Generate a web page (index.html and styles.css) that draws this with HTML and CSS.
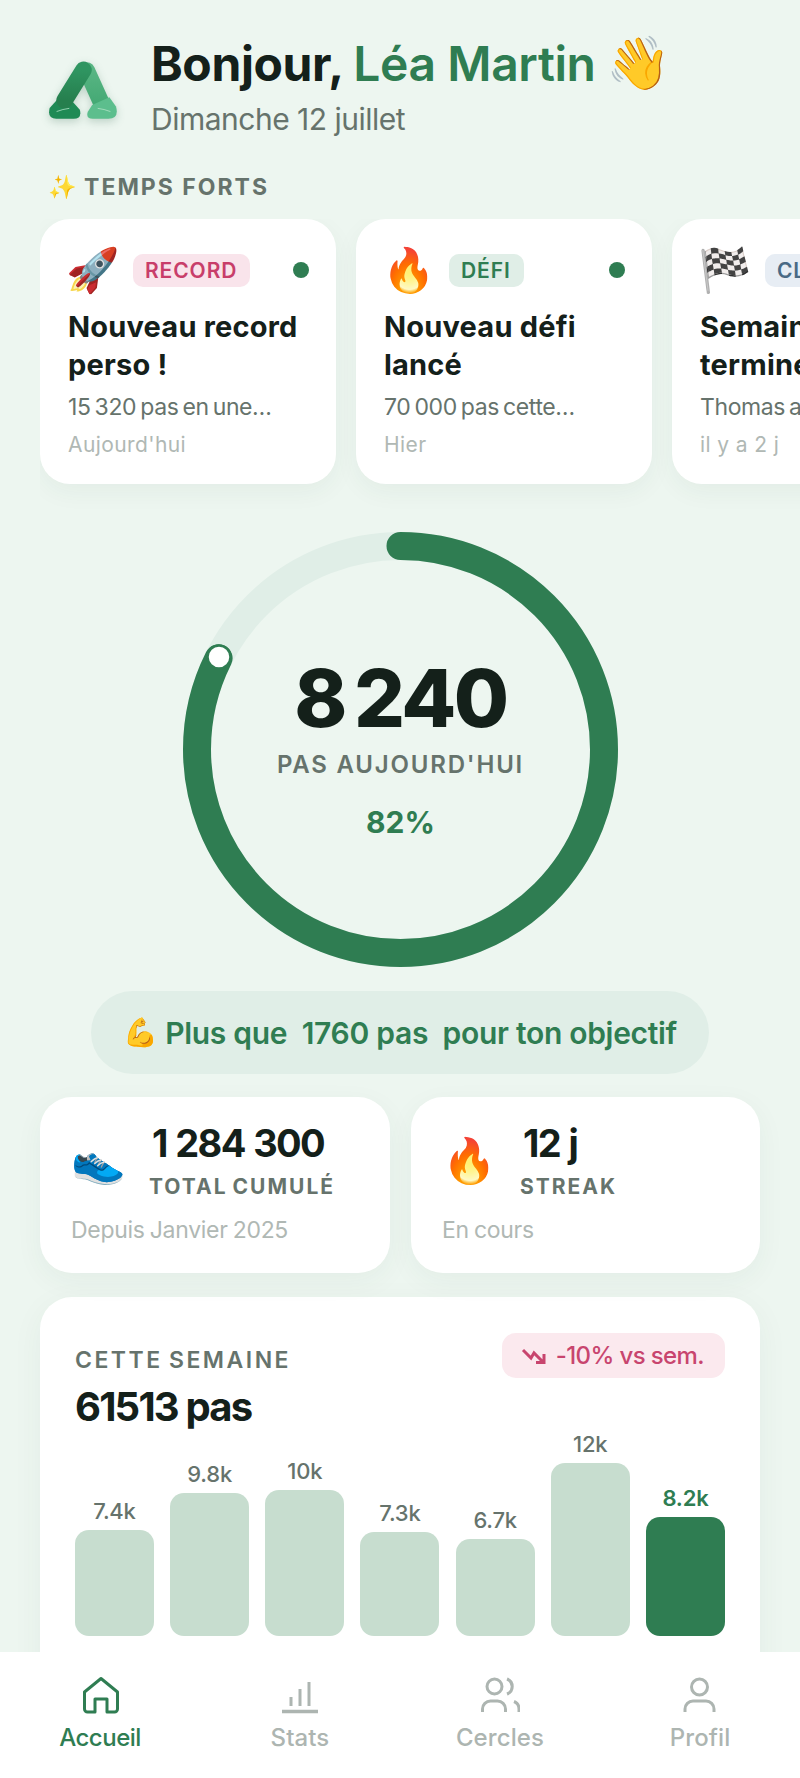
FILE: index.html
```html
<!DOCTYPE html>
<html lang="fr">
<head>
<meta charset="utf-8">
<title>Accueil</title>
<link rel="stylesheet" href="styles.css">
</head>
<body>
<div class="page">
  <main class="content">
    <header class="header">
      <svg class="logo" viewBox="50 50 220 200" aria-hidden="true">
        <defs>
          <linearGradient id="lgDark" x1="0" y1="0" x2="0" y2="1"><stop offset="0" stop-color="#2f9561"/><stop offset="1" stop-color="#267f4e"/></linearGradient>
          <linearGradient id="lgLight" x1="0" y1="0" x2="0" y2="1"><stop offset="0" stop-color="#58b583"/><stop offset="1" stop-color="#44a974"/></linearGradient>
        </defs>
        <path class="arm" stroke="url(#lgLight)" d="M170 90L215 190"/>
        <path fill="#5cbe8d" d="M186 194L173 214Q166 235 188 235H235Q268 235 258 198L238 170Z"/>
        <path fill="#1f8a55" d="M92 165L128 185L149 208Q156 235 130 235H78Q50 235 58 203Z"/>
        <path class="arm" stroke="url(#lgDark)" d="M160 88L103 180"/>
        <path class="logo-shine" d="M80 213Q98 206 116 204M204 204Q222 206 240 213"/>
      </svg>
      <div class="greeting">
        <h1 class="title">Bonjour, <span class="name">Léa Martin</span> <span class="emoji">👋</span></h1>
        <p class="date">Dimanche 12 juillet</p>
      </div>
    </header>

    <h2 class="section-title"><span class="emoji">✨</span> TEMPS FORTS</h2>

    <section class="highlights">
      <article class="hl-card">
        <div class="hl-top"><span class="emoji hl-emoji">🚀</span><span class="tag tag-record">RECORD</span><span class="dot"></span></div>
        <h3 class="hl-title">Nouveau record perso !</h3>
        <p class="hl-sub">15 320 pas en une…</p>
        <p class="hl-time">Aujourd'hui</p>
      </article>
      <article class="hl-card">
        <div class="hl-top"><span class="emoji hl-emoji">🔥</span><span class="tag tag-defi">DÉFI</span><span class="dot"></span></div>
        <h3 class="hl-title">Nouveau défi lancé</h3>
        <p class="hl-sub">70 000 pas cette…</p>
        <p class="hl-time">Hier</p>
      </article>
      <article class="hl-card">
        <div class="hl-top"><span class="emoji hl-emoji">🏁</span><span class="tag tag-class">CLASSEMENT</span></div>
        <h3 class="hl-title">Semaine terminée</h3>
        <p class="hl-sub">Thomas a gagné…</p>
        <p class="hl-time">il y a 2 j</p>
      </article>
    </section>

    <section class="ring">
      <svg class="ring-svg" viewBox="0 0 435 435" aria-hidden="true">
        <circle class="ring-track" cx="217.5" cy="217.5" r="203.5"/>
        <circle class="ring-value" cx="217.5" cy="217.5" r="203.5" pathLength="100" stroke-dasharray="82.4 100" transform="rotate(-90 217.5 217.5)"/>
        <circle class="ring-knob" cx="36" cy="125" r="11.5"/>
      </svg>
      <div class="ring-center">
        <div class="ring-number">8 240</div>
        <div class="ring-label">PAS AUJOURD'HUI</div>
        <div class="ring-pct">82%</div>
      </div>
    </section>

    <div class="goal"><span class="emoji goal-emoji">💪</span> Plus que&nbsp; 1760 pas&nbsp; pour ton objectif</div>

    <section class="stats">
      <article class="stat-card">
        <div class="stat-top">
          <span class="emoji stat-emoji">👟</span>
          <div>
            <div class="stat-num">1 284 300</div>
            <div class="stat-label">TOTAL CUMULÉ</div>
          </div>
        </div>
        <p class="stat-foot">Depuis Janvier 2025</p>
      </article>
      <article class="stat-card">
        <div class="stat-top">
          <span class="emoji stat-emoji">🔥</span>
          <div>
            <div class="stat-num">12 j</div>
            <div class="stat-label">STREAK</div>
          </div>
        </div>
        <p class="stat-foot">En cours</p>
      </article>
    </section>

    <section class="week">
      <div class="week-head">
        <div class="week-left">
          <div class="week-label">CETTE SEMAINE</div>
          <div class="week-total">61513 pas</div>
        </div>
        <div class="trend">
          <svg class="trend-icon" viewBox="0 0 26 16" aria-hidden="true"><path d="M2 2L10 10L13 5L22 14M23 6V14.500H15"/></svg>
          -10% vs sem.
        </div>
      </div>
      <div class="chart">
        <div class="col"><span class="val">7.4k</span><div class="bar" style="height:106px"></div></div>
        <div class="col"><span class="val">9.8k</span><div class="bar" style="height:143px"></div></div>
        <div class="col"><span class="val">10k</span><div class="bar" style="height:146px"></div></div>
        <div class="col"><span class="val">7.3k</span><div class="bar" style="height:104px"></div></div>
        <div class="col"><span class="val">6.7k</span><div class="bar" style="height:97px"></div></div>
        <div class="col"><span class="val">12k</span><div class="bar" style="height:173px"></div></div>
        <div class="col col-today"><span class="val">8.2k</span><div class="bar" style="height:119px"></div></div>
      </div>
    </section>
  </main>

  <nav class="nav">
    <a class="nav-item active">
      <svg class="nav-icon" viewBox="0 0 40 40" aria-hidden="true"><path d="M4.500 16L21 2.500L37.500 16V33a3 3 0 0 1-3 3H27V23H15V36H7.500a3 3 0 0 1-3-3Z"/></svg>
      <span>Accueil</span>
    </a>
    <a class="nav-item">
      <svg class="nav-icon" viewBox="0 0 40 40" aria-hidden="true"><path class="thick" d="M2 35.500H38"/><path d="M11 21V30M20 13V30M29 6V30"/></svg>
      <span>Stats</span>
    </a>
    <a class="nav-item">
      <svg class="nav-icon" viewBox="0 0 40 40" aria-hidden="true"><circle cx="14.500" cy="10.500" r="7.500"/><path d="M27 3a8 8 0 0 1 0 15M2.500 36V33a8 8 0 0 1 8-8h7a8 8 0 0 1 8 8v3M34 25.500a8 8 0 0 1 5 7.500v3"/></svg>
      <span>Cercles</span>
    </a>
    <a class="nav-item">
      <svg class="nav-icon" viewBox="0 0 40 40" aria-hidden="true"><circle cx="19.500" cy="11" r="8"/><path d="M5 36V33a8 8 0 0 1 8-8h13a8 8 0 0 1 8 8v3"/></svg>
      <span>Profil</span>
    </a>
  </nav>
</div>
</body>
</html>
```

FILE: styles.css
```css
* { box-sizing: border-box; }
html, body { margin: 0; padding: 0; }
body {
  font-family: "Inter", "Noto Sans", "Noto Color Emoji", sans-serif;
  color: #14201a;
  background: #edf6f0;
}
h1, h2, h3, p { margin: 0; }
.emoji { font-family: "Noto Color Emoji", sans-serif; font-weight: 400; letter-spacing: 0; }

.page { width: 800px; height: 1778px; display: flex; flex-direction: column; overflow: hidden; }
.content { flex: 1; min-height: 0; overflow: hidden; padding: 34px 40px 0; }

.header { display: flex; align-items: flex-start; }
.logo { width: 73px; height: 67px; margin: 23px 0 0 7px; flex: none; filter: drop-shadow(0 3px 4px rgba(20, 80, 50, .22)); }
.arm { fill: none; stroke-width: 50; stroke-linecap: round; }
.logo-shine { fill: none; stroke: #b9e6cc; stroke-width: 3; stroke-linecap: round; opacity: .75; }
.greeting { margin-left: 31px; }
.title { font-size: 48px; line-height: 60px; font-weight: 700; letter-spacing: -.4px; white-space: nowrap; }
.name { color: #2f7d52; font-weight: 600; }
.title .emoji { font-size: 52px; line-height: 0; }
.date { margin-top: 5px; font-size: 30px; line-height: 40px; color: #66736c; letter-spacing: -.5px; }

.section-title { margin: 32px 0 16px 8px; font-size: 23px; line-height: 32px; font-weight: 700; letter-spacing: 2px; color: #66736c; white-space: nowrap; }
.section-title .emoji { line-height: 0; }

.highlights { display: flex; gap: 20px; margin-right: -40px; overflow: hidden; padding-bottom: 30px; margin-bottom: -30px; }
.hl-card { flex: none; width: 296px; height: 265px; padding: 27px 28px 0; background: #fff; border-radius: 30px; box-shadow: 0 8px 24px rgba(30, 70, 50, .05); }
.hl-top { display: flex; align-items: center; height: 48px; }
.hl-emoji { font-size: 43px; line-height: 48px; width: 50px; flex: none; display: flex; justify-content: center; margin-right: 15px; }
.tag { height: 33px; line-height: 33px; padding: 0 13px 0 12px; border-radius: 10px; font-size: 21px; font-weight: 600; letter-spacing: .9px; white-space: nowrap; }
.tag-record { background: #f9e4eb; color: #c83e6a; }
.tag-defi { background: #e0eee7; color: #2f7d52; }
.tag-class { background: #e7edf4; color: #4a6a85; }
.dot { margin-left: auto; margin-right: -1px; width: 16px; height: 16px; border-radius: 50%; background: #2f7d52; flex: none; }
.hl-title { margin-top: 14px; font-size: 29px; line-height: 38px; font-weight: 700; letter-spacing: .2px; }
.hl-sub { margin-top: 7px; font-size: 23px; line-height: 32px; color: #66736c; white-space: nowrap; letter-spacing: -.4px; word-spacing: -2px; }
.hl-time { margin-top: 8px; font-size: 21px; line-height: 28px; color: #b0b8b4; white-space: nowrap; letter-spacing: .4px; }

.ring { position: relative; width: 435px; height: 435px; margin: 48px auto 0; left: .5px; }
.ring-svg { display: block; width: 435px; height: 435px; }
.ring-track, .ring-value { fill: none; stroke-width: 28; }
.ring-track { stroke: #e0eee7; }
.ring-value { stroke: #2f7d52; stroke-linecap: round; }
.ring-knob { fill: #fff; stroke: #2f7d52; stroke-width: 2.5; }
.ring-center { position: absolute; inset: 0; display: flex; flex-direction: column; align-items: center; justify-content: center; padding-bottom: 1px; }
.ring-number { font-size: 80px; line-height: 84px; font-weight: 800; letter-spacing: -2.5px; word-spacing: -6px; }
.ring-label { margin-top: 9px; font-size: 24px; line-height: 32px; font-weight: 600; letter-spacing: 1.8px; color: #66736c; white-space: nowrap; }
.ring-pct { margin-top: 21px; font-size: 30px; line-height: 40px; font-weight: 700; color: #2f7d52; }

.goal { width: 618px; height: 83px; margin: 24px auto 0; border-radius: 42px; background: #e0eee7; color: #2f7d52; font-size: 30px; font-weight: 600; letter-spacing: -.3px; display: flex; align-items: center; justify-content: center; white-space: pre; }
.goal-emoji { font-size: 28px; }

.stats { display: grid; grid-template-columns: 350px 349px; gap: 21px; margin-top: 23px; }
.stat-card { height: 176px; padding: 24px 20px 0 31px; background: #fff; border-radius: 32px; box-shadow: 0 8px 28px rgba(30, 70, 50, .05); }
.stat-top { display: flex; align-items: center; }
.stat-emoji { font-size: 44px; line-height: 56px; width: 53px; text-align: center; flex: none; margin-right: 25px; }
.stat-num { padding-left: 3px; font-size: 38px; line-height: 44px; font-weight: 700; letter-spacing: -1.6px; word-spacing: 1px; white-space: nowrap; }
.stat-label { margin-top: 8px; font-size: 21px; line-height: 28px; font-weight: 700; letter-spacing: 2px; color: #66736c; white-space: nowrap; word-spacing: -2px; }
.stat-foot { margin-top: 13px; font-size: 23px; line-height: 32px; color: #b0b8b4; white-space: nowrap; letter-spacing: -.3px; word-spacing: -1px; }

.week { margin-top: 24px; height: 420px; padding: 36px 35px 0; background: #fff; border-radius: 32px; box-shadow: 0 8px 32px rgba(30, 70, 50, .05); }
.week-head { display: flex; justify-content: space-between; align-items: flex-start; }
.week-left { padding-top: 12px; }
.week-label { font-size: 23px; line-height: 30px; font-weight: 600; letter-spacing: 2.5px; color: #66736c; white-space: nowrap; word-spacing: -2px; }
.week-total { margin-top: 9px; font-size: 40px; line-height: 46px; font-weight: 700; letter-spacing: -1.8px; }
.trend { height: 45px; padding: 0 21px 0 19px; display: flex; align-items: center; gap: 9px; border-radius: 14px; background: #fbe9ee; color: #c8456e; font-size: 24px; font-weight: 500; letter-spacing: -.6px; white-space: nowrap; }
.trend-icon { width: 26px; height: 16px; flex: none; fill: none; stroke: #c8456e; stroke-width: 3; }

.chart { display: flex; justify-content: space-between; align-items: flex-end; height: 206px; }
.col { width: 79px; display: flex; flex-direction: column; align-items: center; }
.val { font-size: 22px; line-height: 28px; margin-bottom: 5px; font-weight: 500; color: #66736c; letter-spacing: -.2px; }
.bar { width: 100%; background: #c7ddcf; border-radius: 14px; }
.col-today .val { color: #2f7d52; font-weight: 600; }
.col-today .bar { background: #2f7d52; }

.nav { flex: none; position: relative; height: 126px; display: grid; grid-template-columns: repeat(4, 1fr); padding-top: 24px; background: #fff; }
.nav-item { display: flex; flex-direction: column; align-items: center; font-size: 24px; line-height: 30px; font-weight: 500; color: #adb5b1; }
.nav-item span { margin-top: 7px; letter-spacing: .1px; }
.nav-icon { width: 40px; height: 40px; fill: none; stroke: #adb5b1; stroke-width: 3; }
.nav-icon .thick { stroke-width: 3.500; }
.nav-item.active { color: #2f7d52; }
.nav-item.active span { letter-spacing: -.5px; }
.nav-item.active .nav-icon { stroke: #2f7d52; stroke-linejoin: round; }
```
